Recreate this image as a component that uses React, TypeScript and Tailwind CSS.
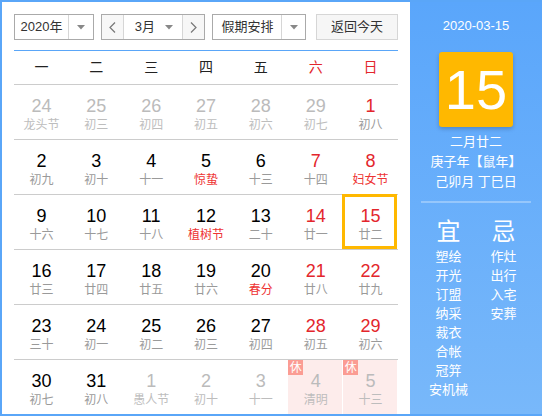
import * as React from 'react'

type Day = {
  d: string
  l: string
  other?: boolean
  red?: boolean
  fest?: boolean
  rest?: boolean
  sel?: boolean
}

const weeks: Day[][] = [
  [
    { d: '24', l: '龙头节', other: true },
    { d: '25', l: '初三', other: true },
    { d: '26', l: '初四', other: true },
    { d: '27', l: '初五', other: true },
    { d: '28', l: '初六', other: true },
    { d: '29', l: '初七', other: true },
    { d: '1', l: '初八', red: true },
  ],
  [
    { d: '2', l: '初九' },
    { d: '3', l: '初十' },
    { d: '4', l: '十一' },
    { d: '5', l: '惊蛰', fest: true },
    { d: '6', l: '十三' },
    { d: '7', l: '十四', red: true },
    { d: '8', l: '妇女节', red: true, fest: true },
  ],
  [
    { d: '9', l: '十六' },
    { d: '10', l: '十七' },
    { d: '11', l: '十八' },
    { d: '12', l: '植树节', fest: true },
    { d: '13', l: '二十' },
    { d: '14', l: '廿一', red: true },
    { d: '15', l: '廿二', red: true, sel: true },
  ],
  [
    { d: '16', l: '廿三' },
    { d: '17', l: '廿四' },
    { d: '18', l: '廿五' },
    { d: '19', l: '廿六' },
    { d: '20', l: '春分', fest: true },
    { d: '21', l: '廿八', red: true },
    { d: '22', l: '廿九', red: true },
  ],
  [
    { d: '23', l: '三十' },
    { d: '24', l: '初一' },
    { d: '25', l: '初二' },
    { d: '26', l: '初三' },
    { d: '27', l: '初四' },
    { d: '28', l: '初五', red: true },
    { d: '29', l: '初六', red: true },
  ],
  [
    { d: '30', l: '初七' },
    { d: '31', l: '初八' },
    { d: '1', l: '愚人节', other: true },
    { d: '2', l: '初十', other: true },
    { d: '3', l: '十一', other: true },
    { d: '4', l: '清明', other: true, rest: true },
    { d: '5', l: '十三', other: true, rest: true },
  ],
]

const yi = ['塑绘', '开光', '订盟', '纳采', '裁衣', '合帐', '冠笄', '安机械']
const ji = ['作灶', '出行', '入宅', '安葬']

function Caret() {
  return (
    <svg width="8" height="5" viewBox="0 0 8 5">
      <path d="M0 0 L8 0 L4 4.5 Z" fill="#888" />
    </svg>
  )
}

function Chevron({ dir }: { dir: 'l' | 'r' }) {
  return (
    <svg width="7" height="11" viewBox="0 0 7 11">
      <polyline
        points={dir === 'l' ? '6,0.5 1,5.5 6,10.5' : '1,0.5 6,5.5 1,10.5'}
        fill="none"
        stroke="#777"
        strokeWidth="1.2"
      />
    </svg>
  )
}

function Cell({ day }: { day: Day }) {
  let num = 'text-black'
  if (day.other) num = 'text-[#bbbbbb]'
  else if (day.red) num = 'text-[#e3262c]'
  let lunar = 'text-[#9a9a9a]'
  if (day.other) lunar = 'text-[#bdbdbd]'
  else if (day.fest) lunar = 'text-[#ee3333]'
  return (
    <div className="relative flex h-[54px] w-[55px] flex-col items-center pt-[10px]">
      {day.rest && <div className="absolute inset-y-0 left-0 right-px bg-[#fdeceb]" />}
      {day.rest && (
        <div className="absolute left-0 top-0 flex h-[15px] w-[15px] items-center justify-center bg-[#fb9c93] text-[12px] leading-none text-white">
          休
        </div>
      )}
      {day.sel && <div className="absolute -top-px bottom-0 left-[-1px] right-px border-[3px] border-[#ffb800]" />}
      <div className={`relative text-[18px] leading-[22px] ${num}`}>{day.d}</div>
      <div className={`relative text-[12px] leading-[16px] ${lunar}`}>{day.l}</div>
    </div>
  )
}

export default function App() {
  return (
    <div
      className="h-[418px] w-[542px] bg-white"
      style={{ fontFamily: '"Liberation Sans", "Noto Sans CJK SC", sans-serif' }}
    >
      <div className="flex h-[416px] w-[542px] border-2 border-r-0 border-[#5aa6f8]">
        <div className="w-[408px] px-3 pt-3">
          <div className="flex h-[26px] items-center text-[13px] text-[#333]">
            <div className="flex h-[26px] w-[80px] items-center border border-[#aaaaaa]">
              <div className="flex h-full w-[54px] items-center justify-center border-r border-[#d6d6d6]">2020年</div>
              <div className="flex flex-1 items-center justify-center">
                <Caret />
              </div>
            </div>
            <div className="ml-[7px] flex h-[26px] w-[105px] items-center border border-[#aaaaaa]">
              <div className="flex h-full w-[22px] items-center justify-center border-r border-[#d6d6d6] bg-[#f7f7f7]">
                <Chevron dir="l" />
              </div>
              <div className="flex h-full flex-1 items-center justify-between pl-[11px] pr-[9px]">
                <span>3月</span>
                <Caret />
              </div>
              <div className="flex h-full w-[22px] items-center justify-center border-l border-[#d6d6d6] bg-[#f7f7f7]">
                <Chevron dir="r" />
              </div>
            </div>
            <div className="ml-[7px] flex h-[26px] w-[94px] items-center border border-[#aaaaaa]">
              <div className="flex h-full w-[69px] items-center justify-center border-r border-[#d6d6d6]">假期安排</div>
              <div className="flex flex-1 items-center justify-center">
                <Caret />
              </div>
            </div>
            <div className="ml-[10px] flex h-[26px] w-[82px] items-center justify-center border border-[#d6d6d6] bg-[#f6f6f6]">
              返回今天
            </div>
          </div>
          <div className="mt-[10px] border-b border-[#5aa6f8]" />
          <div className="flex h-[34px] items-center border-b border-[#cccccc] text-[14px]">
            {['一', '二', '三', '四', '五', '六', '日'].map((w, i) => (
              <div key={w} className={`w-[55px] text-center ${i >= 5 ? 'text-[#e3262c]' : 'text-[#222]'}`}>
                {w}
              </div>
            ))}
          </div>
          {weeks.map((week, i) => (
            <div key={i} className={`flex ${i < 5 ? 'border-b border-[#cccccc]' : ''}`}>
              {week.map((day, j) => (
                <Cell key={j} day={day} />
              ))}
            </div>
          ))}
        </div>
        <div className="flex flex-1 flex-col items-center bg-gradient-to-b from-[#5aa6fb] to-[#78b8fa] pt-[14px] text-white">
          <div className="text-[13px] leading-[20px]">2020-03-15</div>
          <div className="mt-4 flex h-[75px] w-[74px] items-center justify-center rounded-[3px] bg-[#ffb800] text-[56px] leading-none shadow-[0_2px_4px_rgba(0,0,0,0.2)]">
            15
          </div>
          <div className="mt-[5px] text-[13px] leading-[20px]">二月廿二</div>
          <div className="text-[13px] leading-[20px]">庚子年【鼠年】</div>
          <div className="text-[13px] leading-[20px]">己卯月 丁巳日</div>
          <div className="mt-[9px] h-[2px] w-[110px] bg-white/30" />
          <div className="mt-[14px] flex">
            <div className="flex w-[55px] flex-col items-center">
              <div className="text-[24px] leading-[30px]">宜</div>
              {yi.map((t) => (
                <div key={t} className="text-[13px] leading-[19px]">
                  {t}
                </div>
              ))}
            </div>
            <div className="flex w-[55px] flex-col items-center">
              <div className="text-[24px] leading-[30px]">忌</div>
              {ji.map((t) => (
                <div key={t} className="text-[13px] leading-[19px]">
                  {t}
                </div>
              ))}
            </div>
          </div>
        </div>
      </div>
    </div>
  )
}
